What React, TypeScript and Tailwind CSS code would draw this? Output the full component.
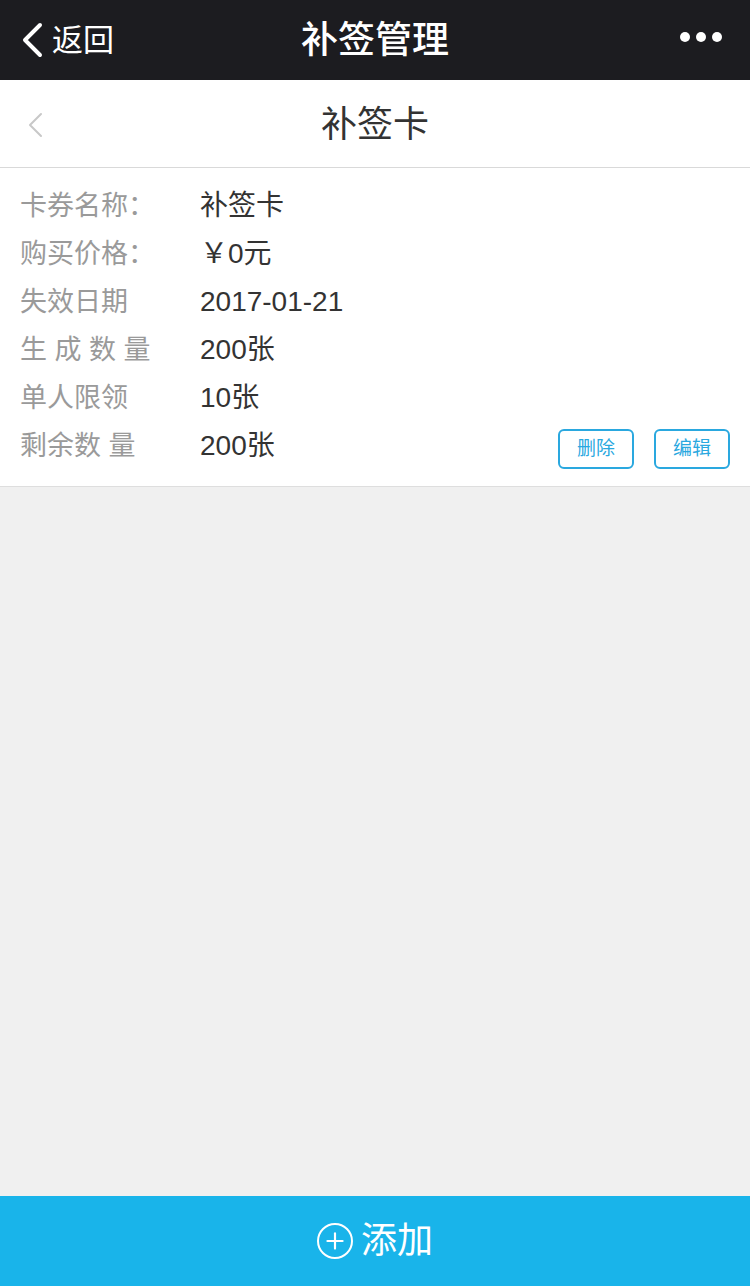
import { Plus } from "lucide-react";

const font = { fontFamily: '"Liberation Sans", "Noto Sans CJK SC", sans-serif' };

const rows: { label: string; value: string; actions?: boolean }[] = [
  { label: "卡券名称：", value: "补签卡" },
  { label: "购买价格：", value: "￥0元" },
  { label: "失效日期", value: "2017-01-21" },
  { label: "生 成 数 量", value: "200张" },
  { label: "单人限领", value: "10张" },
  { label: "剩余数 量", value: "200张", actions: true },
];

function TopBar() {
  return (
    <div className="flex h-[80px] items-center justify-between bg-[#1c1c20] px-[20px] text-white">
      <div className="flex w-[140px] items-center gap-[8px]">
        <svg width="24" height="36" viewBox="0 0 24 36" fill="none">
          <path d="M20 3 L5 18 L20 33" stroke="white" strokeWidth="4" strokeLinecap="round" strokeLinejoin="round" />
        </svg>
        <span className="text-[31px] leading-none">返回</span>
      </div>
      <div className="text-[37px] font-medium leading-none">补签管理</div>
      <div className="mb-[6px] flex w-[140px] items-center justify-end gap-[6px] pr-[8px]">
        <span className="h-[10px] w-[10px] rounded-full bg-white" />
        <span className="h-[10px] w-[10px] rounded-full bg-white" />
        <span className="h-[10px] w-[10px] rounded-full bg-white" />
      </div>
    </div>
  );
}

function SubHeader() {
  return (
    <div className="relative flex h-[88px] items-center justify-center border-b border-[#d9d9d9] bg-white">
      <svg className="absolute left-[26px] top-[32px]" width="18" height="26" viewBox="0 0 18 26" fill="none">
        <path d="M15 2 L4 13 L15 24" stroke="#c8c8c8" strokeWidth="2" strokeLinecap="round" strokeLinejoin="round" />
      </svg>
      <div className="pt-[2px] text-[36px] text-[#333]">补签卡</div>
    </div>
  );
}

function InfoCard() {
  return (
    <div className="border-b border-[#dedede] bg-white px-[20px] pt-[14px] pb-[16px]">
      {rows.map((r) => (
        <div key={r.label} className="flex h-[48px] items-center">
          <div className="w-[180px] whitespace-pre text-[27px] text-[#9a9a9a]">{r.label}</div>
          <div className="flex-1 whitespace-pre text-[28px] text-[#333]">{r.value}</div>
          {r.actions ? (
            <div className="mt-[6px] flex gap-[20px]">
              <button className="h-[40px] w-[76px] rounded-[6px] border-2 border-[#2aa8df] text-[19px] text-[#2aa8df]">
                删除
              </button>
              <button className="h-[40px] w-[76px] rounded-[6px] border-2 border-[#2aa8df] text-[19px] text-[#2aa8df]">
                编辑
              </button>
            </div>
          ) : null}
        </div>
      ))}
    </div>
  );
}

export default function App() {
  return (
    <div className="flex h-[1286px] w-[750px] flex-col bg-[#f0f0f0]" style={font}>
      <TopBar />
      <SubHeader />
      <InfoCard />
      <div className="flex-1" />
      <button className="flex h-[90px] items-center justify-center gap-[8px] bg-[#19b4ea] text-white">
        <span className="flex h-[36px] w-[36px] items-center justify-center rounded-full border-2 border-white">
          <Plus size={26} strokeWidth={2} />
        </span>
        <span className="text-[36px] leading-none">添加</span>
      </button>
    </div>
  );
}
